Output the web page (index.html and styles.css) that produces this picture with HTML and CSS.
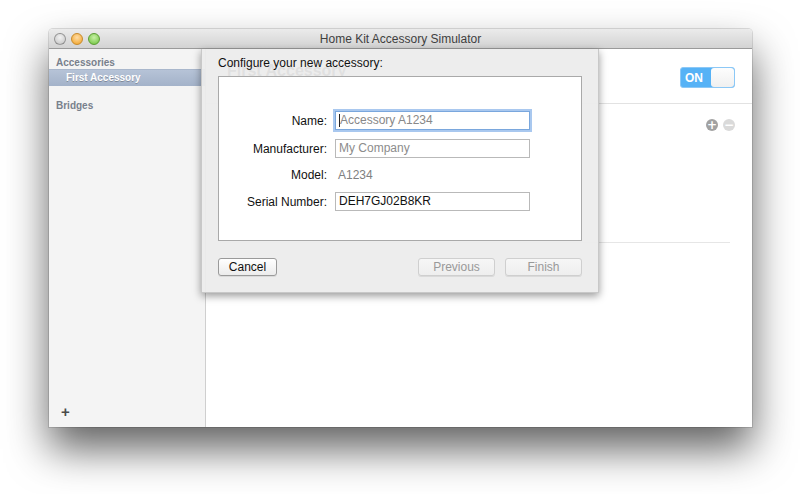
FILE: index.html
```html
<!DOCTYPE html>
<html lang="en">
<head>
    <meta charset="UTF-8">
    <title>Home Kit Accessory Simulator</title>
    <link rel="stylesheet" href="styles.css">
</head>
<body>
    <div class="window">
        <div class="titlebar">
            <div class="lights">
                <span class="light close"></span>
                <span class="light min"></span>
                <span class="light zoom"></span>
            </div>
            <div class="title">Home Kit Accessory Simulator</div>
        </div>

        <div class="body">
            <div class="sidebar">
                <div class="group">Accessories</div>
                <div class="item selected">First Accessory</div>
                <div class="group bridges">Bridges</div>
                <div class="spacer"></div>
                <div class="add">+</div>
            </div>

            <div class="main">
                <div class="header">
                    <div class="big-title">First Accessory</div>
                    <div class="toggle">
                        <span class="on">ON</span>
                        <span class="knob"></span>
                    </div>
                </div>
                <div class="services">
                    <div class="tools">
                        <span class="circle plus">+</span>
                        <span class="circle minus">&minus;</span>
                    </div>
                    <div class="rule"></div>
                </div>
            </div>
        </div>

        <!-- sheet dropped down from the title bar -->
        <div class="sheet">
            <div class="sheet-title">Configure your new accessory:</div>
            <div class="box">
                <div class="form">
                    <label>Name:</label>
                    <div class="field focus"><span class="caret"></span>Accessory A1234</div>
                    <label>Manufacturer:</label>
                    <div class="field placeholder">My Company</div>
                    <label>Model:</label>
                    <div class="static">A1234</div>
                    <label>Serial Number:</label>
                    <div class="field">DEH7GJ02B8KR</div>
                </div>
            </div>
            <div class="buttons">
                <button class="btn cancel">Cancel</button>
                <div class="spacer"></div>
                <button class="btn disabled wide">Previous</button>
                <button class="btn disabled wide">Finish</button>
            </div>
        </div>
    </div>
</body>
</html>
```

FILE: styles.css
```css
html, body {
    margin: 0;
    background: #ffffff;
}
body {
    font-family: "Liberation Sans", Arial, sans-serif;
    width: 800px;
    height: 494px;
    padding-top: 29px;
    box-sizing: border-box;
    overflow: hidden;
}
.window {
    position: relative;
    margin-left: 49px;
    width: 703px;
    height: 398px;
    display: flex;
    flex-direction: column;
    border-radius: 4px 4px 0 0;
    box-shadow: 0 22px 42px rgba(0,0,0,0.62), 0 0 0 1px rgba(0,0,0,0.12);
    background: #fff;
}
.titlebar {
    height: 19px;
    display: flex;
    align-items: center;
    background: linear-gradient(#ebebeb, #d3d3d3);
    border-bottom: 1px solid #9a9a9a;
    border-radius: 4px 4px 0 0;
    position: relative;
}
.lights {
    display: flex;
    gap: 5px;
    padding-left: 5px;
}
.light {
    width: 10px;
    height: 10px;
    border-radius: 50%;
    border: 1px solid rgba(0,0,0,0.3);
}
.light.close { background: radial-gradient(circle at 50% 35%, #f2f2f2, #c2c2c2); }
.light.min { background: radial-gradient(circle at 50% 35%, #ffdca6, #f0a020); border-color: #c88a2c; }
.light.zoom { background: radial-gradient(circle at 50% 35%, #c8f0a6, #6ac23a); border-color: #5c9c34; }
.title {
    position: absolute;
    left: 0;
    right: 0;
    text-align: center;
    font-size: 12px;
    color: #404040;
}
.body {
    flex: 1;
    display: flex;
    min-height: 0;
}
.sidebar {
    width: 156px;
    background: #f4f4f4;
    border-right: 1px solid #cfcfcf;
    display: flex;
    flex-direction: column;
    padding-top: 7px;
}
.group {
    font-size: 10px;
    font-weight: bold;
    color: #78808c;
    padding-left: 7px;
    height: 13px;
    line-height: 13px;
}
.group.bridges {
    margin-top: 13px;
}
.item {
    font-size: 10px;
    font-weight: bold;
    padding-left: 17px;
    height: 16px;
    line-height: 16px;
}
.item.selected {
    color: #fff;
    background: linear-gradient(#b6c3d7, #a3b2c9);
    border-top: 1px solid #a9b7cc;
    text-shadow: 0 1px 0 rgba(0,0,0,0.25);
}
.sidebar .spacer {
    flex: 1;
}
.add {
    font-size: 15px;
    font-weight: bold;
    color: #4a4a4a;
    padding-left: 12px;
    height: 16px;
    line-height: 16px;
    margin-bottom: 7px;
}
.main {
    flex: 1;
    display: flex;
    flex-direction: column;
}
.header {
    height: 55px;
    border-bottom: 1px solid #e2e2e2;
    display: flex;
    align-items: flex-start;
    padding: 18px 17px 0 21px;
    box-sizing: border-box;
}
.big-title {
    flex: 1;
    font-size: 16px;
    font-weight: bold;
    color: #222;
    margin-top: -5px;
}
.toggle {
    width: 55px;
    height: 21px;
    box-sizing: border-box;
    border: 1px solid #8cc8f6;
    border-radius: 3px;
    background: #56b2f6;
    display: flex;
    align-items: center;
}
.toggle .on {
    color: #fff;
    font-size: 12px;
    font-weight: bold;
    padding-left: 4px;
    width: 24px;
}
.toggle .knob {
    flex: 1;
    align-self: stretch;
    background: linear-gradient(#fdfdfd, #f0f0f0);
    border-radius: 3px;
    margin-left: 2px;
}
.services {
    padding: 15px 17px 0 14px;
}
.tools {
    display: flex;
    justify-content: flex-end;
    gap: 5px;
}
.circle {
    width: 12px;
    height: 12px;
    border-radius: 50%;
    color: #fff;
    font-size: 12px;
    font-weight: bold;
    line-height: 12px;
    text-align: center;
    font-family: "DejaVu Sans", sans-serif;
}
.circle.plus { background: #a2a2a2; }
.circle.minus { background: #dadada; }
.rule {
    margin-top: 111px;
    margin-right: 5px;
    border-top: 1px solid #e6e6e6;
}

/* sheet */
.sheet {
    position: absolute;
    left: 152px;
    top: 20px;
    width: 398px;
    height: 244px;
    box-sizing: border-box;
    background: rgba(236,236,236,0.94);
    box-shadow: 0 3px 8px rgba(0,0,0,0.4);
    border: 1px solid #c8c8c8;
    border-top: none;
    padding: 7px 16px 0 16px;
    display: flex;
    flex-direction: column;
}
.sheet-title {
    font-size: 12px;
    color: #111;
    height: 20px;
    line-height: 14px;
}
.box {
    height: 165px;
    box-sizing: border-box;
    background: #fff;
    border: 1px solid #a9a9a9;
    padding-top: 34px;
}
.form {
    display: grid;
    grid-template-columns: 108px 195px;
    column-gap: 8px;
    row-gap: 9px;
    align-items: center;
    font-size: 12px;
}
.form label {
    text-align: right;
    color: #111;
}
.field {
    height: 19px;
    box-sizing: border-box;
    border: 1px solid #b9b9b9;
    background: #fff;
    padding-left: 3px;
    line-height: 17px;
    color: #111;
    display: flex;
    align-items: center;
}
.field.focus {
    border-color: #7aa7dd;
    box-shadow: 0 0 0 2px #a9c8ef;
    color: #888;
}
.caret {
    width: 1px;
    height: 13px;
    background: #222;
}
.field.placeholder {
    color: #8c8c8c;
}
.static {
    color: #808080;
    padding-left: 3px;
    height: 16px;
    line-height: 16px;
}
.buttons {
    display: flex;
    align-items: center;
    gap: 10px;
    margin-top: 17px;
}
.buttons .spacer {
    flex: 1;
}
.btn {
    font-family: inherit;
    font-size: 12px;
    height: 18px;
    padding: 0;
    border: 1px solid #9a9a9a;
    border-radius: 3px;
    background: linear-gradient(#ffffff, #ececec);
    color: #111;
    box-shadow: 0 1px 0 rgba(0,0,0,0.08);
}
.btn.cancel {
    width: 59px;
}
.btn.wide {
    width: 77px;
}
.btn.disabled {
    color: #999;
    border-color: #cfcfcf;
    background: linear-gradient(#f6f6f6, #eeeeee);
}
```
